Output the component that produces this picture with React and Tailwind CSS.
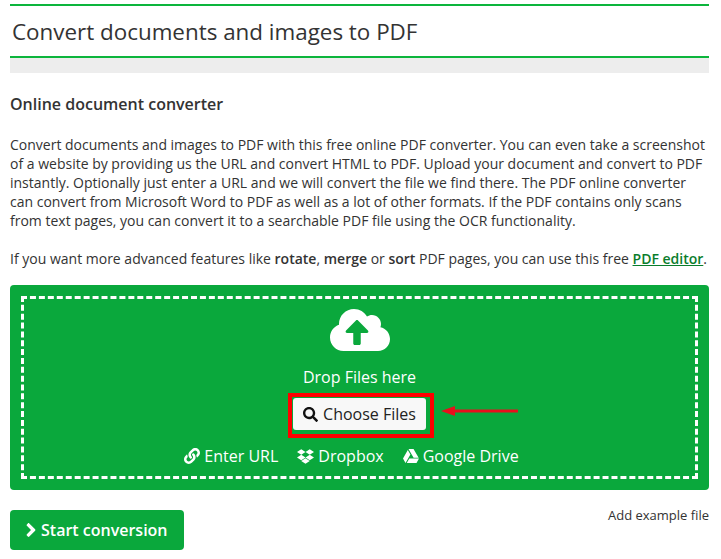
import { FaCloudUploadAlt, FaSearch, FaLink, FaDropbox, FaGoogleDrive, FaAngleRight } from "react-icons/fa";

export default function App() {
  return (
    <div className="relative h-[559px] w-[721px] overflow-hidden bg-white pl-[10px] pr-[12px] pt-1 font-['Open_Sans',sans-serif] text-[14px] leading-[19px] text-[#333]">
      <div className="border-y-2 border-[#0cb53c] pl-[2px] pt-[11px] pb-[9px]">
        <h1 className="text-[22.4px] leading-[30px] font-normal text-[#333]">Convert documents and images to PDF</h1>
      </div>
      <div className="h-[15px] bg-[#ededed]" />
      <h2 className="mt-[21px] text-[16px] leading-5 font-semibold">Online document converter</h2>
      <p className="mt-[21px]">
        Convert documents and images to PDF with this free online PDF converter. You can even take a screenshot of a website by providing us the URL and convert HTML to PDF. Upload your document and convert to PDF instantly. Optionally just enter a URL and we will convert the file we find there. The PDF online converter can convert from Microsoft Word to PDF as well as a lot of other formats. If the PDF contains only scans from text pages, you can convert it to a searchable PDF file using the OCR functionality.
      </p>
      <p className="mt-[19px] whitespace-nowrap">
        If you want more advanced features like <b className="font-semibold">rotate</b>, <b className="font-semibold">merge</b> or <b className="font-semibold">sort</b> PDF pages, you can use this free <a className="font-semibold text-[#0a7d2c] underline">PDF editor</a>.
      </p>
      <div className="mt-[17px] rounded-[4px] bg-[#0aa83c] p-[11px]">
        <div className="flex h-[183px] flex-col items-center border-[3px] border-dashed border-white text-[16px] text-white">
          <FaCloudUploadAlt className="mt-[7px] h-[48px] w-[60px]" />
          <div className="mt-[12px] leading-[22px]">Drop Files here</div>
          <div className="relative mt-[10px] flex h-[32px] w-[133px] items-center justify-center gap-[5px] rounded-[3px] bg-[#f8f8f8] text-[#222]">
            <FaSearch className="h-[15px] w-[15px] text-[#111]" />
            <span>Choose Files</span>
            <div className="absolute -left-[5px] -right-[8px] -top-[5px] -bottom-[8px] border-[4px] border-[#f00]" />
            <svg className="absolute left-[148px] top-[5px]" width="77" height="16" viewBox="0 0 77 16">
              <path d="M0 8 L14 3 L14 6.5 L77 6.5 L77 9.5 L14 9.5 L14 13 Z" fill="#e8101c" />
            </svg>
          </div>
          <div className="mt-[15px] flex items-center gap-[19px] pr-[16px] leading-[22px]">
            <span className="flex items-center gap-[4px]"><FaLink className="h-[16px] w-[16px]" />Enter URL</span>
            <span className="flex items-center gap-[4px]"><FaDropbox className="h-[17px] w-[17px]" />Dropbox</span>
            <span className="flex items-center gap-[4px]"><FaGoogleDrive className="h-[16px] w-[16px]" />Google Drive</span>
          </div>
        </div>
      </div>
      <div className="flex items-start justify-between">
        <button className="mt-[20px] flex h-[40px] w-[174px] items-center rounded-[4px] bg-[#0aa83c] pl-[14px] text-[16px] font-semibold text-white">
          <FaAngleRight className="h-[22px] w-[14px]" />
          <span className="ml-[3px]">Start conversion</span>
        </button>
        <span className="mt-[16px] text-[13px] leading-[18px] text-[#333]">Add example file</span>
      </div>
    </div>
  );
}
